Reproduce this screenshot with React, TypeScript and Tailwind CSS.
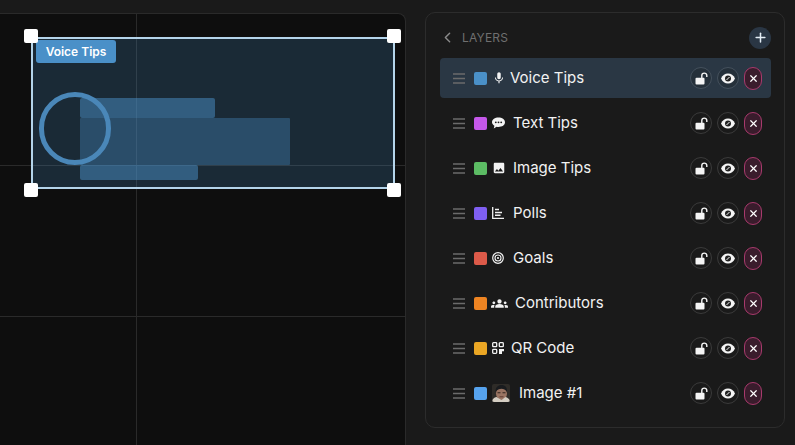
import React from "react";
import { MdMic, MdImage, MdGroups } from "react-icons/md";
import { ChevronLeft, Plus, X } from "lucide-react";

const Drag = () => (
  <svg width="12" height="11" viewBox="0 0 12 11" className="shrink-0">
    <path d="M0 1h12M0 5.5h12M0 10h12" stroke="#6b6b6b" strokeWidth="1.6" />
  </svg>
);

const Bubble = () => (
  <svg width="13" height="12" viewBox="0 0 13 12">
    <path d="M6.500 .5C10 .5 13 2.500 13 5.300S10 10 6.500 10c-.7 0-1.300-.1-1.900-.2L1.800 11.500l.6-2.800C.9 7.800 0 6.600 0 5.300 0 2.500 3 .5 6.500 .5Z" fill="#f4f4f4" />
    <circle cx="3.800" cy="5.300" r=".9" fill="#1a1a1a" />
    <circle cx="6.500" cy="5.300" r=".9" fill="#1a1a1a" />
    <circle cx="9.200" cy="5.300" r=".9" fill="#1a1a1a" />
  </svg>
);

const Polls = () => (
  <svg width="12" height="12" viewBox="0 0 12 12">
    <path d="M.7 0v11.300H12" fill="none" stroke="#f2f2f2" strokeWidth="1.300" />
    <path d="M3 2.500h4M3 5.500h7M3 8.300h5.500" stroke="#f2f2f2" strokeWidth="1.500" />
  </svg>
);

const Target = () => (
  <svg width="12" height="12" viewBox="0 0 12 12">
    <circle cx="6" cy="6" r="5.300" fill="none" stroke="#f2f2f2" strokeWidth="1.200" />
    <circle cx="6" cy="6" r="3" fill="none" stroke="#f2f2f2" strokeWidth="1.100" />
    <circle cx="6" cy="6" r="1.100" fill="#f2f2f2" />
  </svg>
);

const Qr = () => (
  <svg width="12" height="12" viewBox="0 0 12 12">
    <rect x=".7" y=".7" width="4" height="4" rx=".8" fill="none" stroke="#f2f2f2" strokeWidth="1.300" />
    <rect x="7.300" y=".7" width="4" height="4" rx=".8" fill="none" stroke="#f2f2f2" strokeWidth="1.300" />
    <rect x=".7" y="7.300" width="4" height="4" rx=".8" fill="none" stroke="#f2f2f2" strokeWidth="1.300" />
    <path d="M7 7h5v2.200h-2V12H7Z" fill="#f2f2f2" />
  </svg>
);

const Face = () => (
  <svg width="18" height="18" viewBox="0 0 18 18" className="rounded-[2px]">
    <rect width="18" height="18" fill="#2f2c28" />
    <ellipse cx="9.500" cy="9.500" rx="5.500" ry="6.500" fill="#9a7462" />
    <path d="M3.500 8C3.500 3 6 1 9.500 1S15.500 3.500 15 8C13.500 5.500 11.500 4.800 9.500 4.800S5 6 3.500 8Z" fill="#191b1e" />
    <path d="M5.500 8.800h3M10.500 8.800h3" stroke="#33251f" strokeWidth="1.100" />
    <path d="M7.500 12.800h4" stroke="#5e3d32" strokeWidth="1" />
    <path d="M0 18c.5-3.500 2-4.500 4.500-5l5 3 4-3c2 .5 4 1.500 4.500 5Z" fill="#d4cdc2" />
  </svg>
);

const Lock = () => (
  <svg width="13" height="13" viewBox="0 0 13 13">
    <rect x="0.500" y="5.800" width="9" height="6.700" rx="1" fill="#f4f4f4" />
    <path d="M6.800 6V3.600a2.500 2.500 0 0 1 5 0V5" fill="none" stroke="#f4f4f4" strokeWidth="1.400" />
  </svg>
);

const Eye = () => (
  <svg width="14" height="11" viewBox="0 0 14 11">
    <path d="M0 5.500C1.500 2 4 .5 7 .5s5.500 1.500 7 5c-1.500 3.500-4 5-7 5s-5.500-1.500-7-5Z" fill="#f4f4f4" />
    <circle cx="7" cy="5.500" r="3" fill="#222" />
    <path d="M5.500 7 8.500 4" stroke="#f4f4f4" strokeWidth="1" />
  </svg>
);

type Row = { name: string; color: string; icon: React.ReactNode; gap: string; active?: boolean };

const rows: Row[] = [
  { name: "Voice Tips", color: "bg-[#4a90c8]", icon: <MdMic size={14} />, gap: "ml-[4px]", active: true },
  { name: "Text Tips", color: "bg-[#c558ea]", icon: <Bubble />, gap: "ml-[8px]" },
  { name: "Image Tips", color: "bg-[#5cbc64]", icon: <MdImage size={14} />, gap: "ml-[7px]" },
  { name: "Polls", color: "bg-[#7f5ff2]", icon: <Polls />, gap: "ml-[9px]" },
  { name: "Goals", color: "bg-[#dc5a49]", icon: <Target />, gap: "ml-[9px]" },
  { name: "Contributors", color: "bg-[#ee8422]", icon: <MdGroups size={17} className="-mx-[1px]" />, gap: "ml-[8px]" },
  { name: "QR Code", color: "bg-[#eaa624]", icon: <Qr />, gap: "ml-[7px]" },
  { name: "Image #1", color: "bg-[#56a3ee]", icon: <Face />, gap: "ml-[9px]" },
];

export default function App() {
  return (
    <div
      className="flex w-[795px] h-[445px] overflow-hidden bg-[#1a1a1a] text-[#f2f2f2]"
      style={{ fontFamily: 'Inter, "Liberation Sans", sans-serif' }}
    >
      <div className="relative mt-[13px] w-[406px] h-[432px] shrink-0 bg-[#0e0e0e] border-t border-r border-[#2a2a2a] rounded-tr-[8px]">
        <div className="absolute left-[136px] top-0 bottom-0 w-px bg-[#2a2a2a]" />
        <div className="absolute left-0 right-0 top-[151px] h-px bg-[#2a2a2a]" />
        <div className="absolute left-0 right-0 top-[302px] h-px bg-[#2a2a2a]" />

        <div className="absolute left-[31px] top-[23px] w-[364px] h-[152px] bg-[#4a90c8]/22 border-2 border-[#b4d4ea]">
          <div className="absolute left-[3px] top-[1px] h-[23px] w-[80px] rounded-[3px] bg-[#4a90c8] flex items-center justify-center text-[12px] font-semibold text-white">
            Voice Tips
          </div>
          <div className="absolute left-[47px] top-[59px] w-[135px] h-[20px] rounded-[2px] bg-[#4a90c8]/50" />
          <div className="absolute left-[47px] top-[79px] w-[210px] h-[47px] rounded-[1px] bg-[#4a90c8]/35" />
          <div className="absolute left-[47px] top-[126px] w-[118px] h-[15px] rounded-[2px] bg-[#4a90c8]/50" />
          <div className="absolute left-[6px] top-[53px] w-[72px] h-[73px] rounded-full border-[5px] border-[#4a87b8]" />
        </div>

        <div className="absolute left-[24px] top-[15px] w-[14px] h-[14px] rounded-[2px] bg-white" />
        <div className="absolute left-[387px] top-[15px] w-[14px] h-[14px] rounded-[2px] bg-white" />
        <div className="absolute left-[24px] top-[169px] w-[14px] h-[14px] rounded-[2px] bg-white" />
        <div className="absolute left-[387px] top-[169px] w-[14px] h-[14px] rounded-[2px] bg-white" />
      </div>

      <div className="ml-[19px] mt-[12px] w-[360px] h-[416px] shrink-0 rounded-[10px] border border-[#2c2c2c] pl-[14px] pr-[13px]">
        <div className="flex items-center h-[45px] pt-[4px]">
          <ChevronLeft size={17} strokeWidth={2} className="text-[#8a8a8a] -ml-[1px]" />
          <span className="ml-[6px] text-[12px] tracking-[0.2px] text-[#6f6f6f]">LAYERS</span>
          <div className="ml-auto w-[22px] h-[22px] rounded-full bg-[#2a3644] flex items-center justify-center">
            <Plus size={15} strokeWidth={2.400} className="text-[#e4edf5]" />
          </div>
        </div>
        <div className="flex flex-col gap-[5px]">
          {rows.map((r) => (
            <div
              key={r.name}
              className={`flex items-center h-[40px] rounded-[4px] pl-[13px] pr-[9px] ${r.active ? "bg-[#2a3744]" : ""}`}
            >
              <Drag />
              <span className={`ml-[9px] w-[13px] h-[13px] rounded-[2px] shrink-0 ${r.color}`} />
              <span className="ml-[5px] flex items-center justify-center text-[#f2f2f2]">{r.icon}</span>
              <span className={`${r.gap} text-[15px] leading-[20px] -mt-[1px]`}>{r.name}</span>
              <div className="ml-auto flex items-center">
                <span className={`w-[22px] h-[22px] rounded-full border flex items-center justify-center ${r.active ? "bg-[#25303a] border-[#44505c]" : "border-[#3a3a3a]"}`}>
                  <Lock />
                </span>
                <span className={`ml-[5px] w-[22px] h-[22px] rounded-full border flex items-center justify-center ${r.active ? "bg-[#25303a] border-[#44505c]" : "border-[#3a3a3a]"}`}>
                  <Eye />
                </span>
                <span className="ml-[5px] w-[18px] h-[23px] rounded-[9px] bg-[#3a1c2c] border border-[#a83a6c] flex items-center justify-center">
                  <X size={11} strokeWidth={2.600} className="text-white" />
                </span>
              </div>
            </div>
          ))}
        </div>
      </div>
    </div>
  );
}
